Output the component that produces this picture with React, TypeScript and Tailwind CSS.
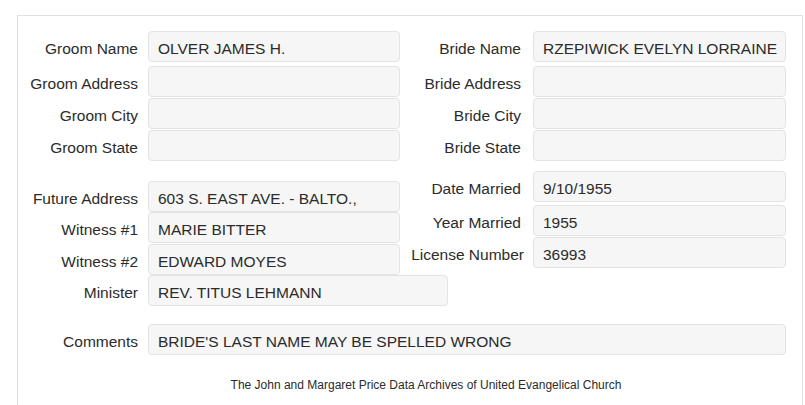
type FieldProps = {
  label: string;
  value?: string;
  labelW: string;
  boxW: string;
  gap: string;
  mt: string;
};

function Field({ label, value, labelW, boxW, gap, mt }: FieldProps) {
  return (
    <div className={`flex h-[31px] items-stretch ${mt}`}>
      <div
        className={`flex shrink-0 items-center justify-end whitespace-nowrap pt-[4px] ${labelW} ${gap}`}
      >
        {label}
      </div>
      <div
        className={`flex shrink-0 items-center rounded-[4px] border border-[#e3e3e3] bg-[#f6f6f6] pt-[4px] pl-[9px] whitespace-nowrap ${boxW}`}
      >
        {value}
      </div>
    </div>
  );
}

export default function App() {
  return (
    <div className="h-[405px] overflow-hidden bg-white font-['Liberation_Sans',Arial,sans-serif] text-[15.5px] text-[#2b2b2b]">
      <div className="ml-[17px] mr-[2px] mt-[15px] min-h-[420px] border-l border-t border-r border-[#e1e1e1] pt-[15px]">
        <div className="flex">
          {/* Groom column */}
          <div className="w-[382px] shrink-0">
            <Field label="Groom Name" value="OLVER JAMES H." labelW="w-[120px]" gap="mr-[10px]" boxW="w-[252px]" mt="mt-0" />
            <Field label="Groom Address" labelW="w-[120px]" gap="mr-[10px]" boxW="w-[252px]" mt="mt-[4px]" />
            <Field label="Groom City" labelW="w-[120px]" gap="mr-[10px]" boxW="w-[252px]" mt="mt-[1px]" />
            <Field label="Groom State" labelW="w-[120px]" gap="mr-[10px]" boxW="w-[252px]" mt="mt-[1px]" />
          </div>
          {/* Bride column */}
          <div>
            <Field label="Bride Name" value="RZEPIWICK EVELYN LORRAINE" labelW="w-[121px]" gap="mr-[12px]" boxW="w-[253px]" mt="mt-0" />
            <Field label="Bride Address" labelW="w-[121px]" gap="mr-[12px]" boxW="w-[253px]" mt="mt-[4px]" />
            <Field label="Bride City" labelW="w-[121px]" gap="mr-[12px]" boxW="w-[253px]" mt="mt-[1px]" />
            <Field label="Bride State" labelW="w-[121px]" gap="mr-[12px]" boxW="w-[253px]" mt="mt-[1px]" />
          </div>
        </div>

        <div className="flex">
          <div className="w-[382px] shrink-0">
            <Field label="Future Address" value="603 S. EAST AVE. - BALTO.," labelW="w-[120px]" gap="mr-[10px]" boxW="w-[252px]" mt="mt-[20px]" />
            <Field label="Witness #1" value="MARIE BITTER" labelW="w-[120px]" gap="mr-[10px]" boxW="w-[252px]" mt="mt-0" />
            <Field label="Witness #2" value="EDWARD MOYES" labelW="w-[120px]" gap="mr-[10px]" boxW="w-[252px]" mt="mt-[1px]" />
            <Field label="Minister" value="REV. TITUS LEHMANN" labelW="w-[120px]" gap="mr-[10px]" boxW="w-[300px]" mt="mt-0" />
          </div>
          <div>
            <Field label="Date Married" value="9/10/1955" labelW="w-[121px]" gap="mr-[12px]" boxW="w-[253px]" mt="mt-[10px]" />
            <Field label="Year Married" value="1955" labelW="w-[121px]" gap="mr-[12px]" boxW="w-[253px]" mt="mt-[3px]" />
            <Field label="License Number" value="36993" labelW="w-[124px]" gap="mr-[9px]" boxW="w-[253px]" mt="mt-[1px]" />
          </div>
        </div>

        <Field
          label="Comments"
          value="BRIDE'S LAST NAME MAY BE SPELLED WRONG"
          labelW="w-[120px]"
          gap="mr-[10px]"
          boxW="w-[638px]"
          mt="mt-[18px]"
        />

        <p className="mt-[23px] pl-[32px] text-center text-[12px] leading-[14px]">
          The John and Margaret Price Data Archives of United Evangelical Church
        </p>
      </div>
    </div>
  );
}
